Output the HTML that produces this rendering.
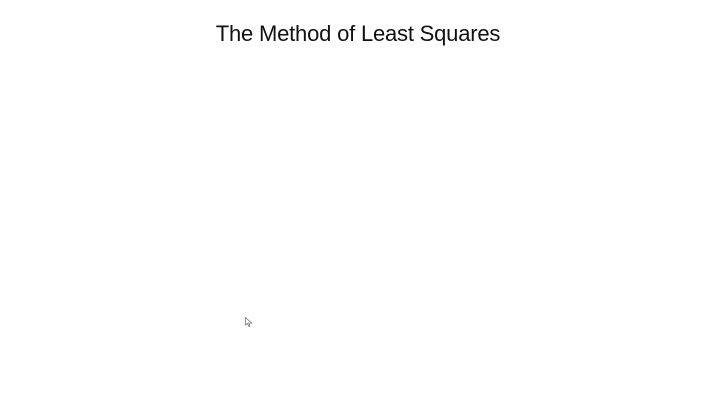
<!DOCTYPE html>
<html><head><style>
html,body{margin:0;padding:0;background:#fff;}
body{width:720px;height:405px;position:relative;overflow:hidden;}
.t{position:absolute;left:0;width:716px;top:21px;text-align:center;font-family:"Liberation Sans",sans-serif;font-size:22px;color:#111;letter-spacing:-0.2px;}
.c{position:absolute;left:245px;top:317px;}
</style></head><body>
<div class="t">The Method of Least Squares</div>
<svg class="c" width="8" height="10" viewBox="0 0 8 10"><path d="M0.5 0.5 L0.5 8 L2.5 6.5 L4 9.5 L5 9 L3.8 6 L6.5 6 Z" fill="#fff" stroke="#777" stroke-width="0.8"/></svg>
</body></html>
